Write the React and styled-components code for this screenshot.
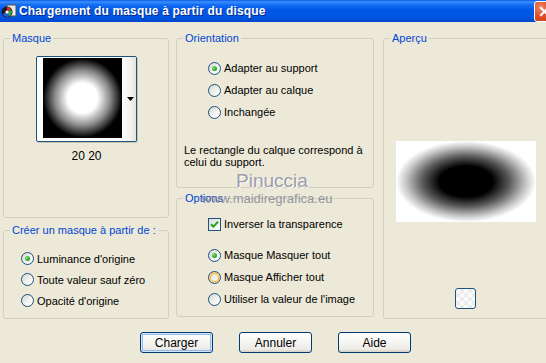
import React from "react";
import styled, { createGlobalStyle, css } from "styled-components";

const GlobalStyle = createGlobalStyle`
  html, body {
    margin: 0;
    padding: 0;
    background: #ece9d8;
  }
  body {
    font-family: "Liberation Sans", Arial, sans-serif;
    font-size: 11px;
    color: #000;
  }
`;

const Window = styled.div`
  position: relative;
  width: 546px;
  height: 363px;
  overflow: hidden;
  background: #ece9d8;
`;

const TitleBar = styled.div`
  height: 22px;
  display: flex;
  align-items: center;
  background: linear-gradient(
    180deg,
    #0a5ce8 0%,
    #3d8ffc 9%,
    #1570f5 20%,
    #0058e8 45%,
    #0055e3 80%,
    #0046c8 100%
  );
  color: #fff;
  padding-left: 1px;
`;

const Title = styled.span`
  margin-left: 2px;
  font-family: "Liberation Sans", Arial, sans-serif;
  font-weight: bold;
  font-size: 12px;
  letter-spacing: 0.15px;
  text-shadow: 1px 1px 0 #0a2a8c;
  flex: 1;
`;

const CloseButton = styled.div`
  width: 21px;
  height: 21px;
  margin-right: -9px;
  box-sizing: border-box;
  border: 1px solid #fff;
  border-radius: 3px;
  background: radial-gradient(circle at 30% 30%, #f08a6c 0%, #e0502c 45%, #c63710 100%);
  display: flex;
  align-items: center;
  justify-content: center;
`;

const Body = styled.div`
  display: flex;
  gap: 8px;
  padding: 10px 0 0 3px;
`;

const Column = styled.div`
  display: flex;
  flex-direction: column;
  gap: ${(p) => p.$gap}px;
  margin-left: ${(p) => p.$ml || 0}px;
`;

const Group = styled.fieldset`
  margin: 0;
  padding: 0;
  min-width: 0;
  box-sizing: border-box;
  width: ${(p) => p.$w}px;
  height: ${(p) => p.$h}px;
  border: 1px solid #d0d0bf;
  border-radius: 3px;
`;

const Legend = styled.legend`
  margin-left: 6px;
  padding: 0 2px;
  line-height: 13px;
  color: #0046d5;
  font-size: 11px;
`;

const Inner = styled.div`
  display: flex;
  flex-direction: column;
  align-items: ${(p) => p.$align || "flex-start"};
  padding: ${(p) => p.$pad};
`;

const Thumb = styled.div`
  width: 101px;
  height: 86px;
  box-sizing: border-box;
  border: 1px solid #1c5180;
  border-radius: 2px;
  background: #fff;
  display: flex;
  box-shadow: 1px 1px 0 #c8c4b4;
`;

const ThumbImage = styled.div`
  width: 79px;
  height: 80px;
  margin: 1px 0 0 6px;
  background: radial-gradient(circle closest-side, #fff 0%, #fff 38%, #8a8a8a 70%, #000 100%);
`;

const ThumbArrow = styled.div`
  flex: 1;
  display: flex;
  align-items: center;
  justify-content: center;
  padding-left: 3px;
  background: linear-gradient(90deg, #fdfdfb 0%, #f3f2ec 60%, #e4e2d8 100%);
`;

const Caption = styled.div`
  margin-top: 8px;
  line-height: 13px;
  font-size: 12px;
`;

const OptionRow = styled.label`
  display: flex;
  align-items: center;
  gap: 3px;
  height: ${(p) => p.$h}px;
  white-space: nowrap;
`;

const Radio = styled.span`
  position: relative;
  width: 13px;
  height: 13px;
  box-sizing: border-box;
  border-radius: 50%;
  border: 1px solid #1c5180;
  background: linear-gradient(135deg, #d8d8d0 0%, #f2f2ee 55%, #ffffff 100%);
  flex: none;
  ${(p) =>
    p.$hover &&
    css`
      box-shadow: inset 0 0 0 1px #fedf9c, inset 0 0 0 2px #f8b636;
    `}
  ${(p) =>
    p.$checked &&
    css`
      &::after {
        content: "";
        position: absolute;
        left: 3px;
        top: 3px;
        width: 5px;
        height: 5px;
        border-radius: 50%;
        background: radial-gradient(circle at 35% 35%, #7ee07a 0%, #2fae2f 55%, #168a16 100%);
      }
    `}
`;

const Check = styled.span`
  width: 13px;
  height: 13px;
  box-sizing: border-box;
  border: 1px solid #1c5180;
  background: linear-gradient(135deg, #dcdcd7 0%, #ffffff 100%);
  display: flex;
  align-items: center;
  justify-content: center;
  flex: none;
`;

const Spacer = styled.div`
  height: ${(p) => p.$h}px;
`;

const Note = styled.p`
  margin: 21px 0 0;
  line-height: 12px;
  font-size: 11px;
`;

const Preview = styled.div`
  width: 140px;
  height: 81px;
  background: radial-gradient(ellipse closest-side, #000 0%, #000 38%, #5a5a5a 62%, #c8c8c8 86%, #fff 100%);
`;

const SmallButton = styled.div`
  width: 21px;
  height: 21px;
  margin: 66px 0 0 59px;
  box-sizing: border-box;
  border: 1px solid #1c5180;
  border-radius: 3px;
  background-color: #fafafa;
  background-image: linear-gradient(45deg, #ececec 25%, transparent 25%, transparent 75%, #ececec 75%),
    linear-gradient(45deg, #ececec 25%, transparent 25%, transparent 75%, #ececec 75%);
  background-size: 8px 8px;
  background-position: 0 0, 4px 4px;
`;

const ButtonRow = styled.div`
  display: flex;
  gap: 26px;
  padding-left: 140px;
  margin-top: 13px;
`;

const Button = styled.button`
  width: 73px;
  height: 21px;
  padding: 0;
  border: 1px solid #003c74;
  border-radius: 3px;
  font-family: "Liberation Sans", Arial, sans-serif;
  font-size: 12px;
  color: #000;
  background: linear-gradient(180deg, #ffffff 0%, #f6f6f2 45%, #ecebe6 85%, #d6d0c5 100%);
  ${(p) =>
    p.$default &&
    css`
      box-shadow: inset 0 0 0 1px #cee7ff, inset 0 0 0 2px #98b8ea;
    `}
`;

const Watermark = styled.div`
  position: absolute;
  left: 206px;
  top: 170px;
  display: flex;
  flex-direction: column;
  align-items: center;
  width: 122px;
  pointer-events: none;
  color: #9595a8;
  opacity: 0.9;
`;

const WatermarkName = styled.span`
  margin-left: 10px;
  font-family: "Liberation Sans", Arial, sans-serif;
  font-size: 19px;
  line-height: 22px;
  text-shadow: 1px 1px 0 #fff;
`;

const WatermarkUrl = styled.span`
  font-family: "Liberation Sans", Arial, sans-serif;
  font-size: 13px;
  line-height: 14px;
  color: #8c8c9c;
`;

const AppIcon = () => (
  <svg width="16" height="16" viewBox="0 0 16 16">
    <rect x="6" y="2" width="9" height="11" fill="#e8e8e8" stroke="#555" strokeWidth="1" />
    <circle cx="6" cy="9" r="5.5" fill="#1a1a1a" />
    <path d="M6 9 L6 4 A5 5 0 0 1 10.5 7 Z" fill="#d23030" />
    <path d="M6 9 L10.5 7 A5 5 0 0 1 8 13.5 Z" fill="#2aa84a" />
    <path d="M6 9 L8 13.5 A5 5 0 0 1 1.5 11 Z" fill="#2d5bd8" />
    <circle cx="6" cy="9" r="1.6" fill="#fff" />
  </svg>
);

const CloseX = () => (
  <svg width="11" height="11" viewBox="0 0 11 11">
    <path d="M2 2 L9 9 M9 2 L2 9" stroke="#fff" strokeWidth="2" strokeLinecap="square" />
  </svg>
);

const Arrow = () => (
  <svg width="7" height="4" viewBox="0 0 7 4">
    <path d="M0 0 H7 L3.5 4 Z" fill="#000" />
  </svg>
);

const CheckMark = () => (
  <svg width="9" height="9" viewBox="0 0 9 9">
    <path d="M1 4.2 L3.4 6.6 L8 1.6" fill="none" stroke="#21a121" strokeWidth="2" />
  </svg>
);

const RadioOption = ({ label, checked, hover, h }) => (
  <OptionRow $h={h}>
    <Radio $checked={checked} $hover={hover} />
    {label}
  </OptionRow>
);

export default function App() {
  return (
    <>
      <GlobalStyle />
      <Window>
        <TitleBar>
          <AppIcon />
          <Title>Chargement du masque à partir du disque</Title>
          <CloseButton>
            <CloseX />
          </CloseButton>
        </TitleBar>

        <Watermark>
          <WatermarkName>Pinuccia</WatermarkName>
          <WatermarkUrl>www.maidiregrafica.eu</WatermarkUrl>
        </Watermark>

        <Body>
          <Column $gap={6}>
            <Group $w={166} $h={186}>
              <Legend>Masque</Legend>
              <Inner $align="center" $pad="11px 0 0 1px">
                <Thumb>
                  <ThumbImage />
                  <ThumbArrow>
                    <Arrow />
                  </ThumbArrow>
                </Thumb>
                <Caption>20 20</Caption>
              </Inner>
            </Group>
            <Group $w={166} $h={95}>
              <Legend>Créer un masque à partir de :</Legend>
              <Inner $pad="11px 0 0 17px">
                <RadioOption h={21} label="Luminance d'origine" checked />
                <RadioOption h={21} label="Toute valeur sauf zéro" />
                <RadioOption h={21} label="Opacité d'origine" />
              </Inner>
            </Group>
          </Column>

          <Column $gap={4} $ml={-1}>
            <Group $w={198} $h={156}>
              <Legend>Orientation</Legend>
              <Inner $pad="12px 0 0 31px">
                <RadioOption h={22} label="Adapter au support" checked />
                <RadioOption h={22} label="Adapter au calque" />
                <RadioOption h={22} label="Inchangée" />
              </Inner>
              <Inner $pad="0 0 0 7px">
                <Note>
                  Le rectangle du calque correspond à
                  <br />
                  celui du support.
                </Note>
              </Inner>
            </Group>
            <Group $w={198} $h={125}>
              <Legend>Options</Legend>
              <Inner $pad="8px 0 0 31px">
                <OptionRow $h={22}>
                  <Check>
                    <CheckMark />
                  </Check>
                  Inverser la transparence
                </OptionRow>
                <Spacer $h={9} />
                <RadioOption h={22} label="Masque Masquer tout" checked />
                <RadioOption h={22} label="Masque Afficher tout" hover />
                <RadioOption h={22} label="Utiliser la valeur de l'image" />
              </Inner>
            </Group>
          </Column>

          <Column $gap={0} $ml={1}>
            <Group $w={172} $h={287}>
              <Legend>Aperçu</Legend>
              <Inner $pad="96px 0 0 12px">
                <Preview />
                <SmallButton />
              </Inner>
            </Group>
          </Column>
        </Body>

        <ButtonRow>
          <Button $default>Charger</Button>
          <Button>Annuler</Button>
          <Button>Aide</Button>
        </ButtonRow>
      </Window>
    </>
  );
}
